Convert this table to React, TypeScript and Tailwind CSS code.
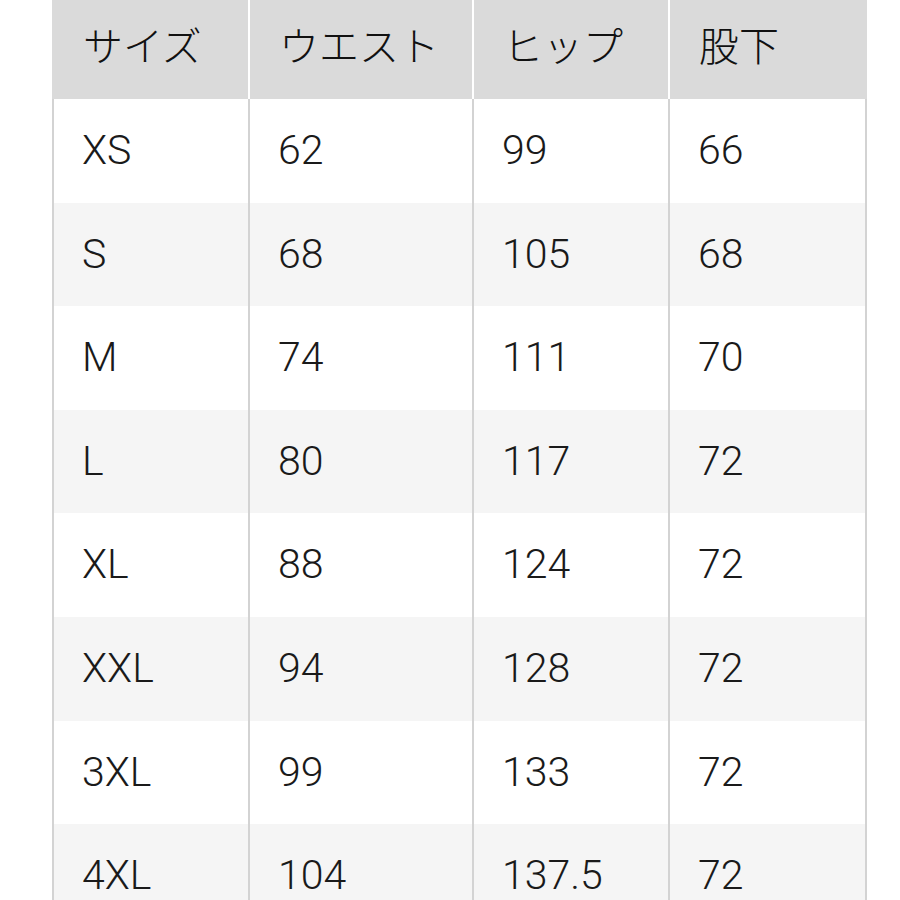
const headers = ["サイズ", "ウエスト", "ヒップ", "股下"]

const rows = [
  ["XS", "62", "99", "66"],
  ["S", "68", "105", "68"],
  ["M", "74", "111", "70"],
  ["L", "80", "117", "72"],
  ["XL", "88", "124", "72"],
  ["XXL", "94", "128", "72"],
  ["3XL", "99", "133", "72"],
  ["4XL", "104", "137.5", "72"],
]

const font = { fontFamily: 'Roboto, "Noto Sans CJK JP", sans-serif' }

export default function App() {
  return (
    <div className="h-[900px] w-[900px] overflow-hidden bg-white text-[#1a1a1a]" style={font}>
      <div className="ml-[52px] w-[815px]">
        <div className="grid h-[99px] grid-cols-[196px_222px_194px_197px] gap-x-[2px] bg-white">
          {headers.map((h) => (
            <div key={h} className="flex items-center bg-[#dadada] pb-[4px] pl-[29px] text-[40px] font-light text-[#111] first:pl-[31px]">
              {h}
            </div>
          ))}
        </div>
        {rows.map((r, i) => (
          <div
            key={r[0]}
            className="grid h-[103.6px] grid-cols-[194px_222px_194px_195px] gap-x-[2px] bg-[#d3d3d3] px-[2px]"
          >
            {r.map((c, j) => (
              <div
                key={j}
                className={`flex items-center pl-[28px] text-[41px] font-light ${i % 2 === 1 ? "bg-[#f5f5f5]" : "bg-white"}`}
              >
                {c}
              </div>
            ))}
          </div>
        ))}
      </div>
    </div>
  )
}
